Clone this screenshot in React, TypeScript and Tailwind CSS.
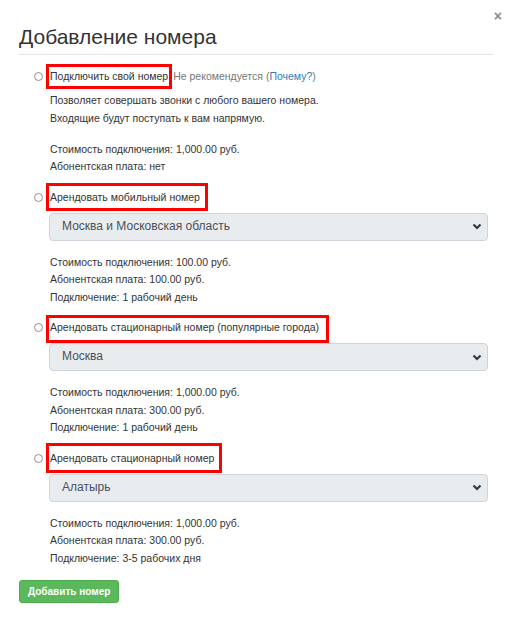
import { ReactNode } from "react";

type Option = {
  label: string;
  box: { top: number; bottom: number; right: number };
  extra?: ReactNode;
  select?: string;
  details: string[];
  desc?: string[];
};

const options: Option[] = [
  {
    label: "Подключить свой номер",
    box: { top: 13, bottom: 12, right: 4 },
    extra: (
      <span className="text-[#777]">
        Не рекомендуется (<span className="text-[#337ab7]">Почему?</span>)
      </span>
    ),
    desc: [
      "Позволяет совершать звонки с любого вашего номера.",
      "Входящие будут поступать к вам напрямую.",
    ],
    details: ["Стоимость подключения: 1,000.00 руб.", "Абонентская плата: нет"],
  },
  {
    label: "Арендовать мобильный номер",
    box: { top: 14, bottom: 14, right: 8 },
    select: "Москва и Московская область",
    details: [
      "Стоимость подключения: 100.00 руб.",
      "Абонентская плата: 100.00 руб.",
      "Подключение: 1 рабочий день",
    ],
  },
  {
    label: "Арендовать стационарный номер (популярные города)",
    box: { top: 13, bottom: 15, right: 10 },
    select: "Москва",
    details: [
      "Стоимость подключения: 1,000.00 руб.",
      "Абонентская плата: 300.00 руб.",
      "Подключение: 1 рабочий день",
    ],
  },
  {
    label: "Арендовать стационарный номер",
    box: { top: 15, bottom: 15, right: 8 },
    select: "Алатырь",
    details: [
      "Стоимость подключения: 1,000.00 руб.",
      "Абонентская плата: 300.00 руб.",
      "Подключение: 3-5 рабочих дня",
    ],
  },
];

function Chevron() {
  return (
    <svg width="10" height="7" viewBox="0 0 10 7" className="shrink-0">
      <path d="M1.5 1.5 L5 5 L8.5 1.5" fill="none" stroke="#343a40" strokeWidth="2.2" />
    </svg>
  );
}

function OptionBlock({ opt, first }: { opt: Option; first: boolean }) {
  return (
    <div className={first ? "" : "mt-[13px]"}>
      <div className="flex items-center h-[17.5px]">
        <span className="w-[9px] h-[9px] rounded-full border border-[#8f8f8f] bg-white mr-[7px] shrink-0" />
        <span className="relative whitespace-nowrap">
          {opt.label}
          {/* annotation frame */}
          <span
            className="absolute border-[3px] border-[#ff0000] pointer-events-none"
            style={{
              left: -4,
              right: -opt.box.right,
              top: 8.75 - opt.box.top,
              bottom: 8.75 - opt.box.bottom,
            }}
          />
        </span>
        {opt.extra && <span className="ml-[5px] whitespace-nowrap">{opt.extra}</span>}
      </div>
      <div className="ml-[16px]">
        {opt.desc && (
          <div className="mt-[6.5px]">
            {opt.desc.map((d) => (
              <div key={d}>{d}</div>
            ))}
          </div>
        )}
        {opt.select && (
          <div className="mt-[6.5px] -ml-px h-[28px] flex items-center justify-between rounded-[4px] border border-[#ced4da] bg-[#e9ecef] pl-[12px] pr-[5px] text-[12px] text-[#495057]">
            <span>{opt.select}</span>
            <Chevron />
          </div>
        )}
        <div className={opt.desc ? "mt-[13.5px]" : "mt-[13px]"}>
          {opt.details.map((d) => (
            <div key={d}>{d}</div>
          ))}
        </div>
      </div>
    </div>
  );
}

export default function App() {
  return (
    <div className="relative w-[512px] h-[629px] bg-white text-[#333] font-['Liberation_Sans',Arial,sans-serif]">
      <button className="absolute top-[9px] right-[10px] text-[14px] leading-[14px] font-bold text-[#8a8a8a]">
        ×
      </button>
      <div className="mx-[19px] pt-[24px] pb-[4px] border-b border-[#e5e5e5]">
        <h2 className="text-[21px] leading-[26px] font-normal">Добавление номера</h2>
      </div>
      <div className="pl-[34px] pr-[24px] pt-[13px] text-[10.5px] leading-[17.5px]">
        {options.map((o, i) => (
          <OptionBlock key={o.label} opt={o} first={i === 0} />
        ))}
      </div>
      <div className="px-[19px] mt-[11px]">
        <button className="h-[23px] px-[8px] rounded-[3px] border border-[#4cae4c] bg-[#5cb85c] text-white text-[10px] font-bold">
          Добавить номер
        </button>
      </div>
    </div>
  );
}
